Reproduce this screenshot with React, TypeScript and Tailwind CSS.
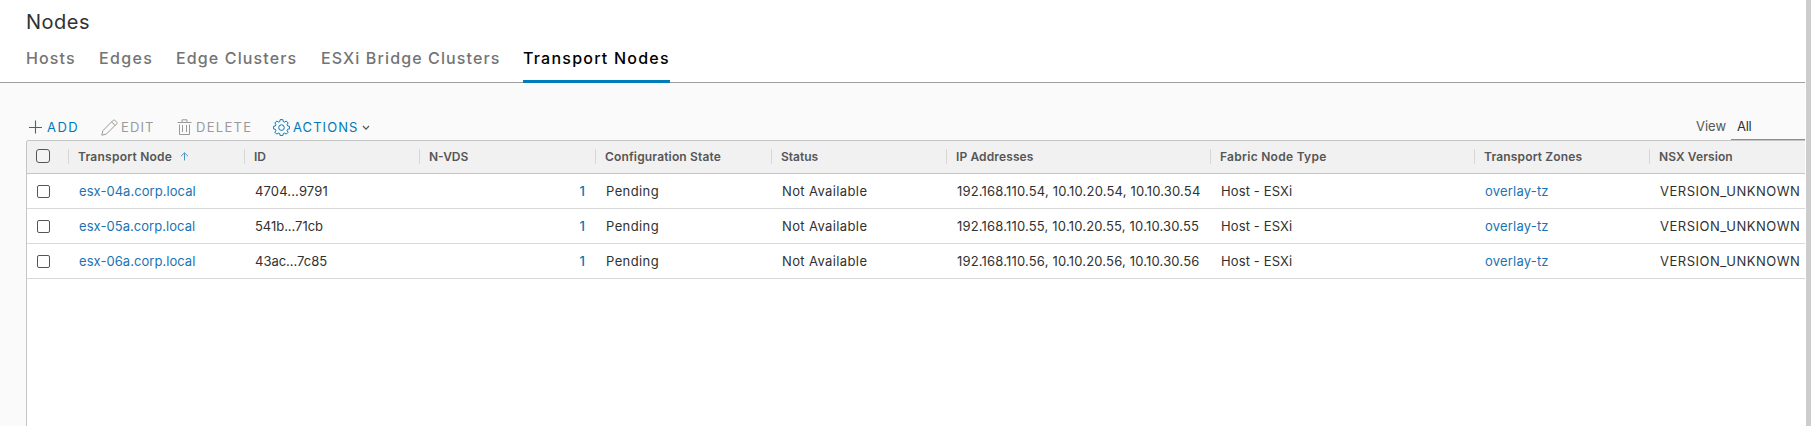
import type { ReactNode } from "react";

const tabs = [
  { label: "Hosts", style: "w-[73px] tracking-[1.13px]" },
  { label: "Edges", style: "w-[77px] tracking-[1.35px]" },
  { label: "Edge Clusters", style: "w-[145px] tracking-[1.13px]" },
  { label: "ESXi Bridge Clusters", style: "w-[203px] tracking-[1.11px]" },
];

const columns = [
  { label: "Transport Node", style: "w-[176px] tracking-[0.24px]", sorted: true },
  { label: "ID", style: "w-[175px]" },
  { label: "N-VDS", style: "w-[176px]" },
  { label: "Configuration State", style: "w-[176px] tracking-[0.16px]" },
  { label: "Status", style: "w-[175px]" },
  { label: "IP Addresses", style: "w-[264px] tracking-[0.12px]" },
  { label: "Fabric Node Type", style: "w-[264px] tracking-[0.28px]" },
  { label: "Transport Zones", style: "w-[175px] tracking-[0.16px]" },
  { label: "NSX Version", style: "flex-1 tracking-[0.1px]" },
];

const rows = [
  { name: "esx-04a.corp.local", id: "4704...9791", ip: "192.168.110.54, 10.10.20.54, 10.10.30.54", idStyle: "tracking-[0.15px]" },
  { name: "esx-05a.corp.local", id: "541b...71cb", ip: "192.168.110.55, 10.10.20.55, 10.10.30.55", idStyle: "tracking-[-0.04px]" },
  { name: "esx-06a.corp.local", id: "43ac...7c85", ip: "192.168.110.56, 10.10.20.56, 10.10.30.56", idStyle: "tracking-[-0.02px]" },
];

function Cell({ className, children }: { className: string; children: ReactNode }) {
  return <div className={`shrink-0 whitespace-nowrap pl-[11px] ${className}`}>{children}</div>;
}

function PlusIcon() {
  return (
    <svg width="14" height="14" viewBox="0 0 14 14" fill="none" stroke="currentColor" strokeWidth="1.1">
      <path d="M6.5 .5v13M0 7.5h13" />
    </svg>
  );
}

function PencilIcon() {
  return (
    <svg width="17" height="17" viewBox="0 0 17 17" fill="none" stroke="currentColor" strokeLinejoin="round">
      <path d="M.8 16.2 1.9 11.6 12.3 1.2Q13 .5 13.7 1.2L15.8 3.3Q16.5 4 15.8 4.7L5.4 15.1ZM10.6 2.9 14.1 6.4" />
    </svg>
  );
}

function TrashIcon() {
  return (
    <svg width="15" height="17" viewBox="0 0 15 17" fill="none" stroke="currentColor">
      <path d="M.5 3.5h14M5 3V.8h5V3M2.5 5.5v10h10v-10M5.5 6v7M9.5 6v7" />
    </svg>
  );
}

function GearIcon() {
  return (
    <svg width="17" height="17" viewBox="0 0 17 17" fill="none" stroke="currentColor" strokeLinejoin="round">
      <path d="M7.2.6h2.6l.5 2 1.2.5 1.8-1 1.8 1.8-1 1.8.5 1.2 2 .5v2.4l-2 .5-.5 1.2 1 1.8-1.8 1.8-1.8-1-1.2.5-.5 2H7.2l-.5-2-1.2-.5-1.8 1-1.8-1.8 1-1.8-.5-1.2-2-.5V7.4l2-.5.5-1.2-1-1.8 1.8-1.8 1.8 1 1.2-.5Z" />
      <circle cx="8.5" cy="8.6" r="2.8" />
    </svg>
  );
}

export default function App() {
  return (
    <div className="flex h-[426px] w-[1811px] overflow-hidden bg-white font-['Inter',sans-serif]">
      <main className="flex w-[1805px] flex-col overflow-hidden">
        <header className="flex h-[83px] shrink-0 flex-col border-b border-[#9f9f9f] pl-[26px]">
          <h1 className="h-[44px] shrink-0 pt-[7px] text-[20px] leading-[30px] tracking-[0.51px] text-[#313131]">Nodes</h1>
          <nav className="flex h-[39px] shrink-0 text-[16px] leading-[28px] font-medium whitespace-nowrap text-[#747474]">
            {tabs.map((t) => (
              <a key={t.label} className={`shrink-0 ${t.style}`}>{t.label}</a>
            ))}
            <a className="-ml-px h-[39px] w-[147px] shrink-0 border-b-3 border-[#007cbb] tracking-[1.23px] text-black">
              Transport Nodes
            </a>
          </nav>
        </header>

        <section className="flex flex-1 flex-col bg-[#fafafa] pl-[26px]">
          <div className="flex h-[57px] shrink-0 justify-between">
            <div className="flex items-start pt-[34px] text-[13px] leading-[20px] text-[#9a9a9a]">
              <button className="flex w-[74px] items-center pl-[3px] text-[#0079b8]">
                <PlusIcon />
                <span className="pl-[4px] tracking-[1.5px]">ADD</span>
              </button>
              <button className="flex w-[76px] items-center pl-px">
                <PencilIcon />
                <span className="pl-[3px] tracking-[1.1px]">EDIT</span>
              </button>
              <button className="flex w-[97px] items-center pl-px">
                <TrashIcon />
                <span className="pl-[4px] tracking-[1.28px]">DELETE</span>
              </button>
              <button className="flex items-center text-[#0079b8]">
                <GearIcon />
                <span className="pl-[3px] tracking-[1.06px]">ACTIONS</span>
                <svg className="mt-px ml-[4px] text-[#565656]" width="8" height="6" viewBox="0 0 8 6" fill="none" stroke="currentColor" strokeWidth="1.2">
                  <path d="M1 1 4 4.2 7 1" />
                </svg>
              </button>
            </div>
            <div className="flex pt-[32px] text-[13px] leading-[22px] text-[#565656]">
              <span className="w-[35px]">View</span>
              <span className="h-[25px] w-[74px] border-b border-[#8c8c8c] pl-[6px] tracking-[-0.3px] text-[#313131]">All</span>
            </div>
          </div>

          <div className="flex flex-1 flex-col overflow-hidden rounded-tl-[3px] border-t border-l border-[#c5c5c5] bg-white text-[13px]">
            <div className="flex h-[33px] shrink-0 items-start border-b border-[#c5c5c5] bg-[#f1f1f1] pt-[8px] text-[12px] font-semibold text-[#565656]">
              <div className="flex w-[41px] shrink-0 items-center pl-[9px]">
                <span className="size-[14px] rounded-[3px] border-[1.5px] border-[#565656] bg-[#f4f4f4]" />
              </div>
              {columns.map((c) => (
                <div key={c.label} className={`flex h-[15px] shrink-0 items-center border-l border-[#d7d7d7] pl-[9px] whitespace-nowrap ${c.style}`}>
                  {c.label}
                  {c.sorted && (
                    <svg className="ml-[8px] text-[#4a98cb]" width="9" height="9" viewBox="0 0 9 9" fill="none" stroke="currentColor">
                      <path d="M4.5 8.5V1M1 4.2 4.5 .8 8 4.2" />
                    </svg>
                  )}
                </div>
              ))}
            </div>
            {rows.map((r) => (
              <div key={r.name} className="flex h-[35px] shrink-0 items-center border-b border-[#d8d8d8] leading-[20px] text-[#313131]">
                <div className="flex w-[41px] shrink-0 items-center pt-px pl-[10px]">
                  <span className="size-[13px] rounded-[2px] border border-[#565656] bg-white" />
                </div>
                <Cell className="w-[176px] tracking-[0.05px] text-[#1b73b3]">{r.name}</Cell>
                <Cell className={`w-[175px] ${r.idStyle}`}>{r.id}</Cell>
                <Cell className="w-[176px] pr-[10px] text-right font-medium text-[#0079b8]">1</Cell>
                <Cell className="w-[176px] tracking-[0.4px]">Pending</Cell>
                <Cell className="w-[175px] tracking-[0.38px]">Not Available</Cell>
                <Cell className="w-[264px] tracking-[0.18px]">{r.ip}</Cell>
                <Cell className="w-[264px] tracking-[0.12px]">Host - ESXi</Cell>
                <Cell className="w-[175px] tracking-[0.2px] text-[#1b73b3]">overlay-tz</Cell>
                <Cell className="tracking-[0.51px]">VERSION_UNKNOWN</Cell>
              </div>
            ))}
          </div>
        </section>
      </main>
      <div className="ml-px w-[5px] bg-[#cdcdcd]" />
    </div>
  );
}
